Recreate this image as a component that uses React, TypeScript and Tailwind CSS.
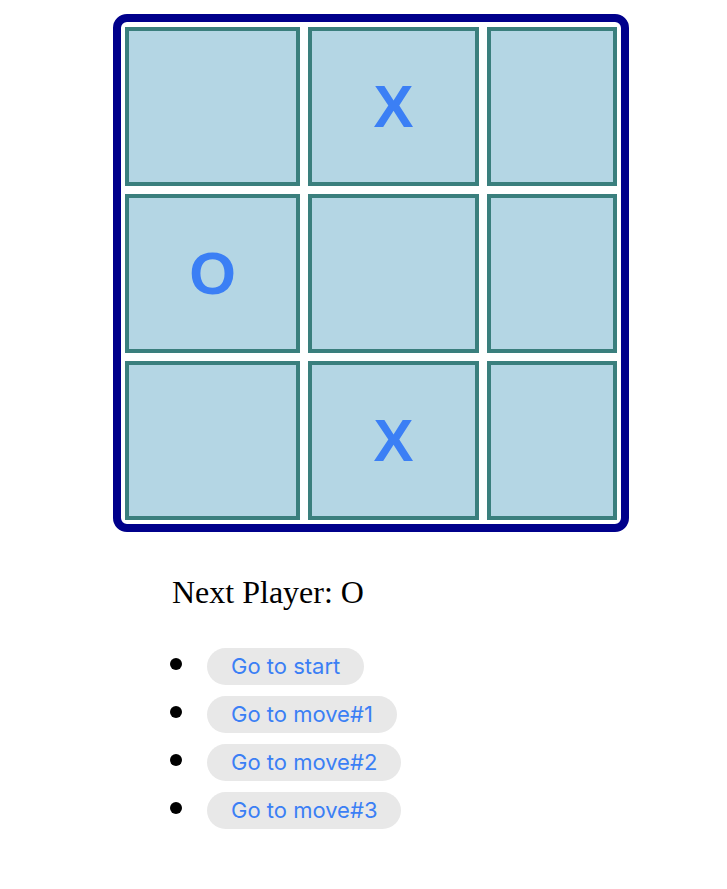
import React from 'react'

const board: (string | null)[] = [null, 'X', null, 'O', null, null, null, 'X', null]
const moves = ['Go to start', 'Go to move#1', 'Go to move#2', 'Go to move#3']

function Square({ value }: { value: string | null }) {
  return (
    <div className="flex h-[159px] items-center justify-center border-4 border-[#3a7f7d] bg-[#b4d6e4] text-[60px] font-bold leading-none text-[#3b7ff5] [font-family:'Liberation_Sans',Arial,sans-serif]">
      {value}
    </div>
  )
}

export default function App() {
  return (
    <div className="min-h-[889px] bg-white pl-[113px] pt-[14px]">
      <div className="grid w-[516px] grid-cols-[175px_171px_130px] gap-2 rounded-[14px] border-8 border-[#00008b] bg-white p-[4px] pt-[5px]">
        {board.map((v, i) => (
          <Square key={i} value={v} />
        ))}
      </div>

      <div className="ml-[59px] mt-[44px] text-[32px] leading-none text-black [font-family:'Liberation_Serif','Times_New_Roman',serif]">
        Next Player: O
      </div>

      <ul className="ml-[57px] mt-[40px] flex flex-col gap-[11px]">
        {moves.map((m) => (
          <li key={m} className="flex items-center">
            <span className="mb-[5px] h-[12px] w-[12px] rounded-full bg-black" />
            <button className="ml-[25px] h-[37px] rounded-full bg-[#e8e8e8] px-6 text-[22px] text-[#3b7ff5] [font-family:Inter,sans-serif]">
              {m}
            </button>
          </li>
        ))}
      </ul>
    </div>
  )
}
